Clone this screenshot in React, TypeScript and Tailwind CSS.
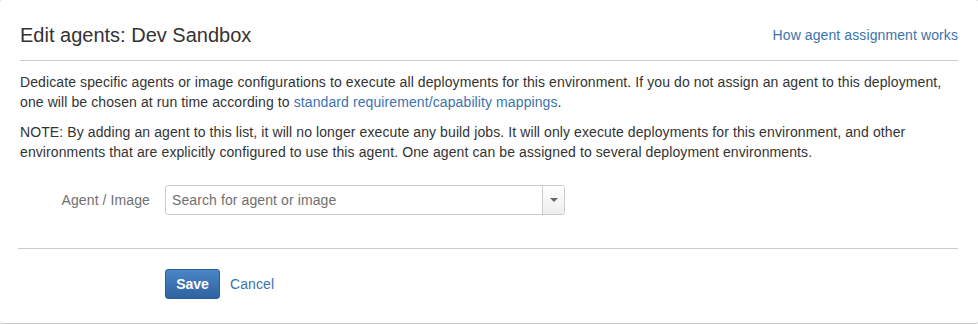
import React from "react";

export default function App() {
  return (
    <div className="w-[978px] h-[324px] overflow-hidden bg-white" style={{ fontFamily: '"Liberation Sans", Arial, sans-serif' }}>
      <div className="-ml-px -mt-px w-[980px] h-[325px] border border-[#cccccc] rounded-[3px] bg-white px-5 text-[14px] leading-[20px] tracking-[0.1px] text-[#333333]">
        <div className="flex items-end justify-between border-b border-[#cccccc] pt-5 pb-[10px]">
          <h2 className="text-[20px] leading-[30px] font-normal tracking-normal text-[#333333]">Edit agents: Dev Sandbox</h2>
          <a className="mb-[5px] text-[#3b73af] cursor-pointer">How agent assignment works</a>
        </div>
        <p className="mt-[11px]">
          Dedicate specific agents or image configurations to execute all deployments for this environment. If you do not assign an agent to this deployment, one will be chosen at run time according to{" "}
          <a className="text-[#3b73af] cursor-pointer">standard requirement/capability mappings</a>.
        </p>
        <p className="mt-[10px]">
          NOTE: By adding an agent to this list, it will no longer execute any build jobs. It will only execute deployments for this environment, and other environments that are explicitly configured to use this agent. One agent can be assigned to several deployment environments.
        </p>
        <div className="mt-[23px] flex items-center">
          <label className="w-[130px] text-right text-[#707070]">Agent / Image</label>
          <div className="ml-[15px] flex h-[30px] w-[400px] items-stretch rounded-[3px] border border-[#cccccc] bg-white overflow-hidden">
            <div className="flex flex-1 items-center pl-[6px] text-[#707070]">Search for agent or image</div>
            <div className="flex w-[22px] items-center justify-center border-l border-[#cccccc] bg-gradient-to-b from-white to-[#eeeeee]">
              <svg width="8" height="4" viewBox="0 0 8 4">
                <path d="M0 0 L8 0 L4 4 Z" fill="#666666" />
              </svg>
            </div>
          </div>
        </div>
        <div className="-ml-[2px] mt-[33px] border-t border-[#cccccc]" />
        <div className="mt-[20px] flex items-center">
          <button className="ml-[145px] h-[30px] w-[55px] rounded-[3px] border border-[#2a5d9a] bg-gradient-to-b from-[#4a85c6] to-[#2f62a1] text-[14px] font-bold tracking-normal text-white">
            Save
          </button>
          <a className="ml-[10px] text-[#3b73af] cursor-pointer">Cancel</a>
        </div>
      </div>
    </div>
  );
}
